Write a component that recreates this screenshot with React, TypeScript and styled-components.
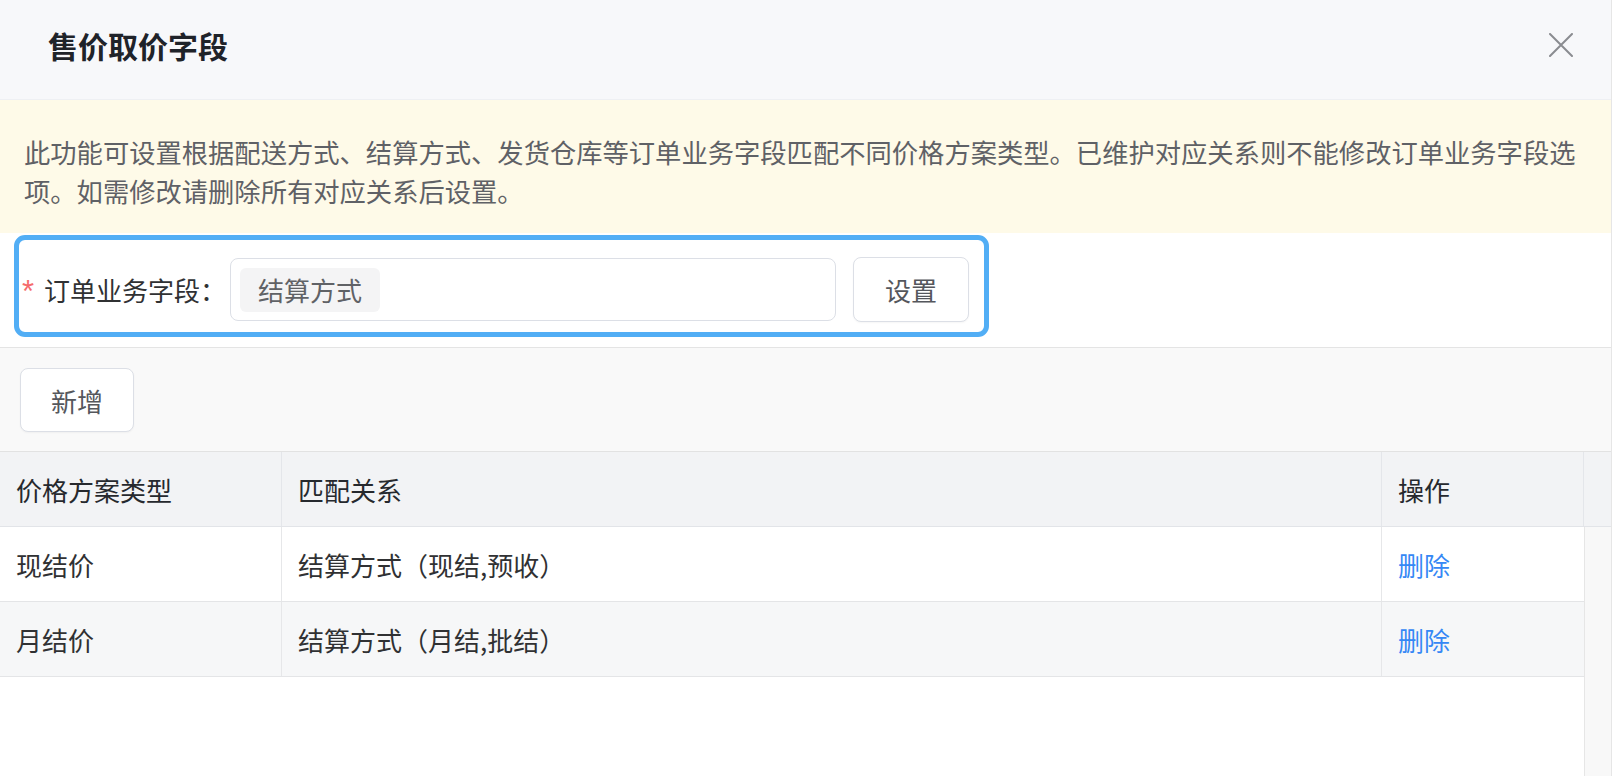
import React from "react";
import styled, { createGlobalStyle } from "styled-components";

const GlobalStyle = createGlobalStyle`
  html, body {
    margin: 0;
    padding: 0;
    background: #ffffff;
  }
  body {
    font-family: "Noto Sans CJK SC", "Noto Sans", "Liberation Sans", sans-serif;
  }
  * { box-sizing: border-box; }
`;

const Modal = styled.div`
  width: 1612px;
  min-height: 100vh;
  border-right: 1px solid #e6e6e6;
  display: flex;
  flex-direction: column;
  background: #ffffff;
`;

const Header = styled.div`
  height: 100px;
  flex: none;
  background: #f7f8fa;
  border-bottom: 1px solid #eef0f3;
  display: flex;
  align-items: center;
  justify-content: space-between;
  padding: 0 38px 9px 48px;
`;

const Title = styled.h1`
  margin: 0;
  font-size: 30px;
  font-weight: 700;
  color: #1f2329;
  line-height: 1;
`;

const CloseButton = styled.button`
  border: none;
  background: transparent;
  padding: 0;
  width: 24px;
  height: 24px;
  display: flex;
  align-items: center;
  justify-content: center;
  cursor: pointer;
`;

const Notice = styled.div`
  flex: none;
  background: #fefae8;
  padding: 32px 30px 23px 24px;
  font-size: 26.3px;
  line-height: 39px;
  color: #5f6166;
`;

const FormSection = styled.div`
  flex: none;
  padding: 2px 14px 10px 14px;
  background: #ffffff;
`;

const Highlight = styled.div`
  display: inline-flex;
  align-items: center;
  border: 5px solid #52aef5;
  border-radius: 11px;
  padding: 17px 15px 10px 3px;
`;

const Label = styled.label`
  display: flex;
  align-items: center;
  font-size: 26px;
  color: #303133;
  width: 208px;
  white-space: nowrap;
`;

const Required = styled.span`
  color: #f56c6c;
  margin-right: 10px;
  font-size: 31px;
  line-height: 1;
  padding-top: 3px;
  font-family: "Liberation Sans", sans-serif;
`;

const SelectBox = styled.div`
  width: 606px;
  height: 63px;
  border: 1px solid #dcdfe6;
  border-radius: 8px;
  display: flex;
  align-items: center;
  padding-left: 9px;
  background: #ffffff;
`;

const Tag = styled.span`
  height: 44px;
  display: inline-flex;
  align-items: center;
  padding: 0 18px;
  background: #f4f4f5;
  border-radius: 6px;
  font-size: 26px;
  color: #606266;
`;

const Button = styled.button<{ $ml?: number }>`
  height: ${(p) => (p.$ml ? 65 : 64)}px;
  width: ${(p) => (p.$ml ? 116 : 114)}px;
  margin-left: ${(p) => p.$ml ?? 0}px;
  border: 1px solid #dcdfe6;
  border-radius: 8px;
  background: #ffffff;
  font-family: inherit;
  font-size: 26px;
  color: #55575c;
  box-shadow: 0 1px 2px rgba(0, 0, 0, 0.04);
  cursor: pointer;
  padding: 0;
`;

const Toolbar = styled.div`
  flex: none;
  background: #f9f9f9;
  border-top: 1px solid #e4e4e4;
  border-bottom: 1px solid #e2e2e2;
  padding: 20px 19px 19px 20px;
`;

const Table = styled.div`
  flex: 1;
  display: flex;
  flex-direction: column;
`;

const HeadRow = styled.div`
  display: flex;
  height: 75px;
  flex: none;
  background: #f2f3f5;
  border-bottom: 1px solid #e2e4e8;
`;

const HeadCell = styled.div<{ $w?: number }>`
  width: ${(p) => (p.$w ? `${p.$w}px` : "auto")};
  flex: ${(p) => (p.$w ? "none" : "1")};
  border-right: ${(p) => (p.$w ? "1px solid #e4e6ea" : "none")};
  display: flex;
  align-items: center;
  padding: 0 16px;
  font-size: 26px;
  color: #26292e;
`;

const BodyArea = styled.div`
  flex: 1;
  display: flex;
`;

const Rows = styled.div`
  width: 1585px;
  flex: none;
  border-right: 1px solid #e6e6e6;
`;

const Row = styled.div<{ $striped?: boolean }>`
  display: flex;
  height: 75px;
  background: ${(p) => (p.$striped ? "#f6f7f8" : "#ffffff")};
  border-bottom: 1px solid #e4e5e7;
`;

const Cell = styled.div<{ $w: number; $last?: boolean }>`
  width: ${(p) => p.$w}px;
  flex: none;
  border-right: ${(p) => (p.$last ? "none" : "1px solid #e6e7e9")};
  display: flex;
  align-items: center;
  padding: 0 16px;
  font-size: 26px;
  color: #303133;
`;

const LinkText = styled.a`
  color: #3588f5;
  cursor: pointer;
  text-decoration: none;
`;

const ScrollTrack = styled.div`
  flex: 1;
  background: #f8f8f8;
`;

const rows = [
  { type: "现结价", rel: "结算方式（现结,预收）" },
  { type: "月结价", rel: "结算方式（月结,批结）" },
];

export default function App() {
  return (
    <>
      <GlobalStyle />
      <Modal>
        <Header>
          <Title>售价取价字段</Title>
          <CloseButton aria-label="关闭">
            <svg width="24" height="24" viewBox="0 0 24 24">
              <path d="M1 1 L23 23 M23 1 L1 23" stroke="#8a8c90" strokeWidth="2" strokeLinecap="round" fill="none" />
            </svg>
          </CloseButton>
        </Header>
        <Notice>
          此功能可设置根据配送方式、结算方式、发货仓库等订单业务字段匹配不同价格方案类型。已维护对应关系则不能修改订单业务字段选项。如需修改请删除所有对应关系后设置。
        </Notice>
        <FormSection>
          <Highlight>
            <Label>
              <Required>*</Required>订单业务字段：
            </Label>
            <SelectBox>
              <Tag>结算方式</Tag>
            </SelectBox>
            <Button $ml={17}>设置</Button>
          </Highlight>
        </FormSection>
        <Toolbar>
          <Button>新增</Button>
        </Toolbar>
        <Table>
          <HeadRow>
            <HeadCell $w={282}>价格方案类型</HeadCell>
            <HeadCell $w={1100}>匹配关系</HeadCell>
            <HeadCell $w={202}>操作</HeadCell>
            <HeadCell />
          </HeadRow>
          <BodyArea>
            <Rows>
              {rows.map((r, i) => (
                <Row key={r.type} $striped={i % 2 === 1}>
                  <Cell $w={282}>{r.type}</Cell>
                  <Cell $w={1100}>{r.rel}</Cell>
                  <Cell $w={202} $last>
                    <LinkText>删除</LinkText>
                  </Cell>
                </Row>
              ))}
            </Rows>
            <ScrollTrack />
          </BodyArea>
        </Table>
      </Modal>
    </>
  );
}
